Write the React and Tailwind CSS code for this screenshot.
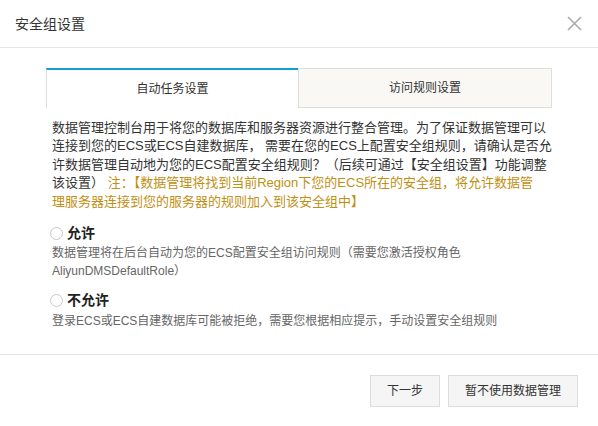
export default function App() {
  const font = { fontFamily: '"Liberation Sans", "Noto Sans CJK SC", sans-serif' };
  return (
    <div className="w-[598px] h-[426px] bg-white text-[#333] flex flex-col" style={font}>
      <div className="h-[48px] shrink-0 border-b border-[#e5e5e5] flex items-center justify-between pl-[15px] pr-[16px]">
        <span className="text-[14px] leading-[20px] text-[#333]">安全组设置</span>
        <svg width="15" height="15" viewBox="0 0 15 15" className="block">
          <path d="M1 1 L14 14 M14 1 L1 14" stroke="#aaa" strokeWidth="1.6" fill="none" />
        </svg>
      </div>
      <div className="flex-1 px-[46px] pt-[20px]">
        <div className="flex h-[40px] w-[506px] text-[12px]">
          <div className="w-[252px] border-t-[2px] border-t-[#1a9bd0] border-l border-l-[#ddd] bg-white flex items-center justify-center">
            自动任务设置
          </div>
          <div className="flex-1 border border-[#ddd] bg-[#f9f8f5] flex items-center justify-center">
            访问规则设置
          </div>
        </div>
        <div className="pl-[6px] mt-[11px] text-[13px] leading-[18.4px] text-[#333]">
          数据管理控制台用于将您的数据库和服务器资源进行整合管理。为了保证数据管理可以<br />
          连接到您的ECS或ECS自建数据库， 需要在您的ECS上配置安全组规则，请确认是否允<br />
          许数据管理自动地为您的ECS配置安全组规则？（后续可通过【安全组设置】功能调整<br />
          该设置） <span className="text-[#c18f12]">注：【数据管理将找到当前Region下您的ECS所在的安全组，将允许数据管<br />
          理服务器连接到您的服务器的规则加入到该安全组中】</span>
        </div>
        <div className="pl-[4px] mt-[12px] flex items-center gap-[4px] h-[20px]">
          <span className="w-[13px] h-[13px] rounded-full border border-[#c8c8c8] bg-white"></span>
          <span className="text-[14px] font-bold text-[#222]">允许</span>
        </div>
        <div className="pl-[6px] mt-[1px] text-[12px] leading-[18px] text-[#666]">
          数据管理将在后台自动为您的ECS配置安全组访问规则（需要您激活授权角色<br />
          AliyunDMSDefaultRole）
        </div>
        <div className="pl-[4px] mt-[10px] flex items-center gap-[4px] h-[20px]">
          <span className="w-[13px] h-[13px] rounded-full border border-[#c8c8c8] bg-white"></span>
          <span className="text-[14px] font-bold text-[#222]">不允许</span>
        </div>
        <div className="pl-[6px] mt-[2px] text-[12px] leading-[18px] text-[#666]">
          登录ECS或ECS自建数据库可能被拒绝，需要您根据相应提示，手动设置安全组规则
        </div>
      </div>
      <div className="h-[72px] shrink-0 border-t border-[#e5e5e5] flex items-start justify-end gap-[8px] pr-[20px] pt-[20px]">
        <button className="w-[70px] h-[32px] bg-[#f5f5f5] border border-[#ddd] text-[12px] text-[#333]">下一步</button>
        <button className="w-[130px] h-[32px] bg-[#f5f5f5] border border-[#ddd] text-[12px] text-[#333]">暂不使用数据管理</button>
      </div>
    </div>
  );
}
